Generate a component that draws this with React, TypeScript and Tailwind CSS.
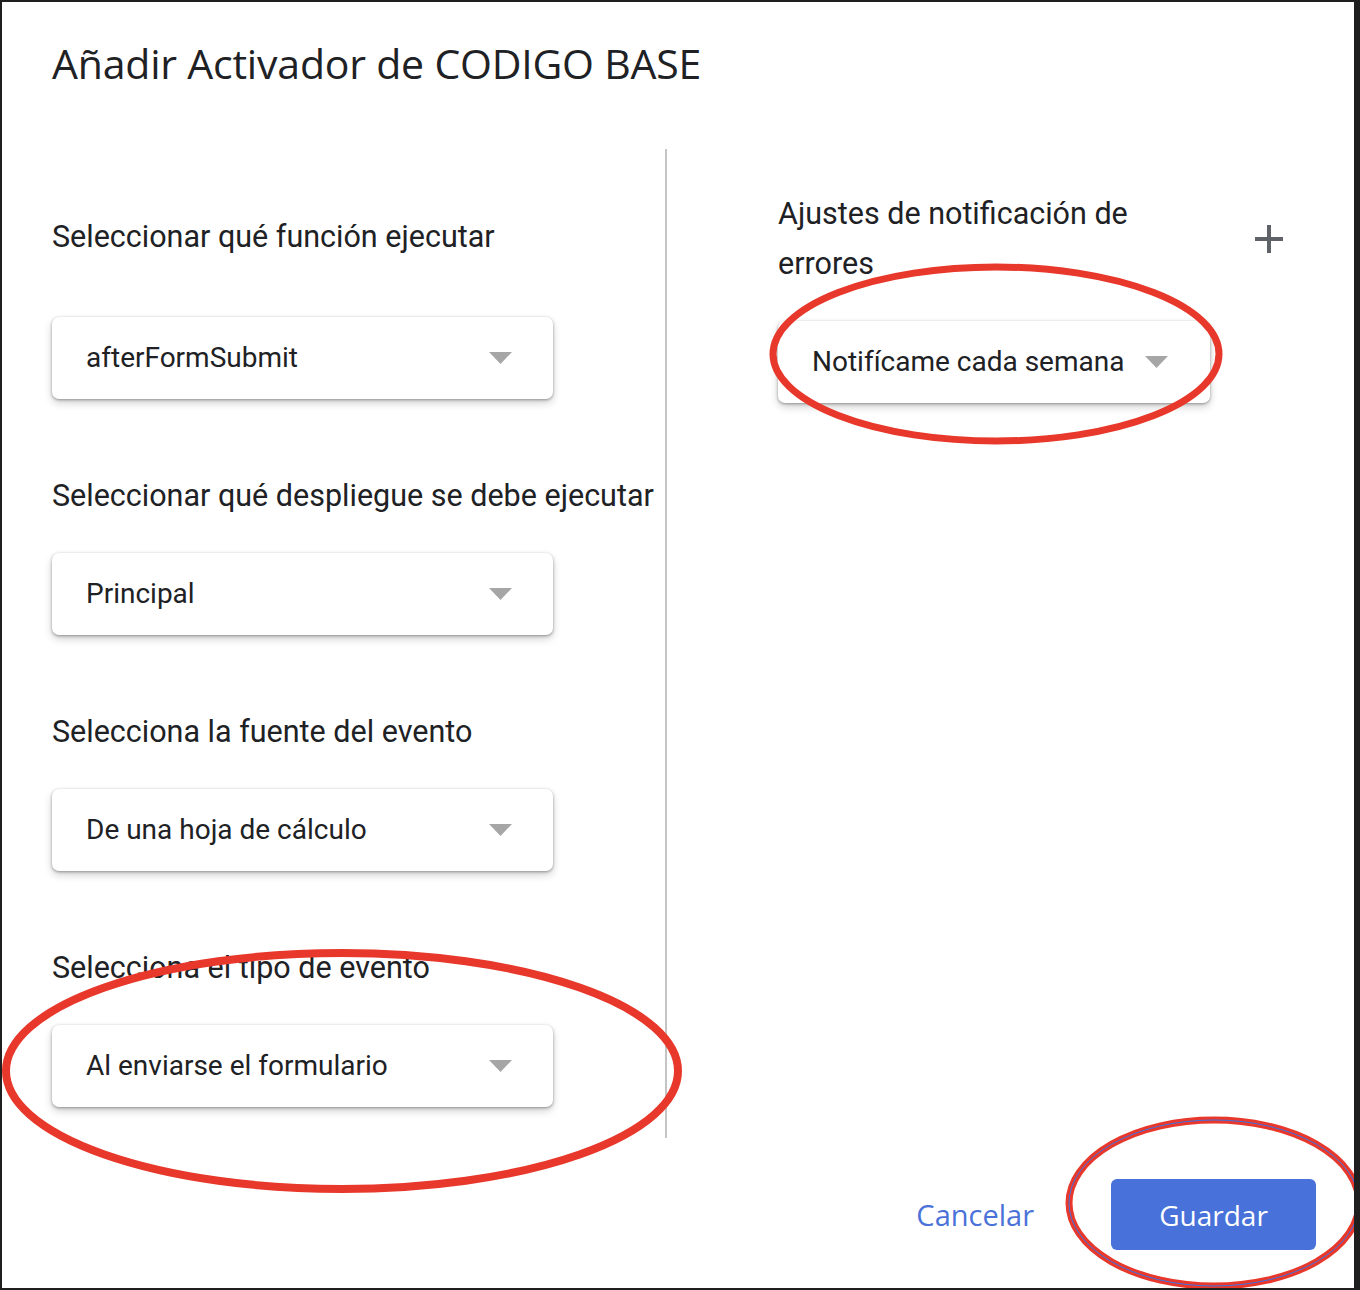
import React from 'react';

function Caret() {
    return (
        <svg width="23" height="12" viewBox="0 0 23 12" className="shrink-0">
            <polygon points="0,0 23,0 11.5,12" fill="#a6a6a6" />
        </svg>
    );
}

function Dropdown({ value, className = '' }: { value: string; className?: string }) {
    return (
        <div className={`flex items-center h-[82px] bg-white rounded-[7px] shadow-[0_1px_3px_rgba(0,0,0,0.35),0_4px_9px_rgba(0,0,0,0.18)] ${className}`}>
            <span className="text-[28px] text-[#202124] font-['Roboto',sans-serif] whitespace-nowrap">{value}</span>
            <Caret />
        </div>
    );
}

function Field({ label, value, top, gap }: { label: string; value: string; top: string; gap: string }) {
    return (
        <div className={top}>
            <div className="text-[30.5px] leading-[50px] text-[#202124] font-['Roboto',sans-serif] whitespace-nowrap">{label}</div>
            <div className={`${gap} w-[501px]`}>
                <Dropdown value={value} className="justify-between pl-[34px] pr-[41px]" />
            </div>
        </div>
    );
}

function Annotations() {
    return (
        <svg width="1360" height="1290" viewBox="0 0 1360 1290" className="absolute -left-[2px] -top-[2px] pointer-events-none">
            <ellipse cx="996" cy="354" rx="223" ry="87" fill="none" stroke="#e8382b" strokeWidth="7" />
            <ellipse cx="342" cy="1071" rx="336" ry="118" fill="none" stroke="#e8382b" strokeWidth="8" />
            <ellipse cx="1214" cy="1203" rx="145" ry="83" fill="none" stroke="#e8382b" strokeWidth="7" />
            <ellipse cx="1214" cy="1203" rx="145" ry="83" fill="none" stroke="#3b73e6" strokeWidth="1" />
        </svg>
    );
}

export default function App() {
    return (
        <div className="w-[1360px] h-[1290px] bg-[#1f1f1f] pt-[2px] pl-[2px] pr-[6px] pb-[2px]">
            <div className="relative w-full h-full bg-white overflow-hidden flex flex-col">
                <h1 className="pl-[50px] pt-[36px] text-[41px] leading-[50px] text-[#202124] font-['Open_Sans',sans-serif] tracking-[-0.2px] whitespace-nowrap">
                    Añadir Activador de CODIGO BASE
                </h1>

                <div className="flex mt-[61px] pl-[50px]">
                    <div className="w-[615px] h-[989px] border-r-2 border-[#c4c4c4]">
                        <Field top="pt-[63px]" gap="mt-[55px]" label="Seleccionar qué función ejecutar" value="afterFormSubmit" />
                        <Field top="pt-[72px]" gap="mt-[32px]" label="Seleccionar qué despliegue se debe ejecutar" value="Principal" />
                        <Field top="pt-[72px]" gap="mt-[32px]" label="Selecciona la fuente del evento" value="De una hoja de cálculo" />
                        <Field top="pt-[72px]" gap="mt-[32px]" label="Selecciona el tipo de evento" value="Al enviarse el formulario" />
                    </div>

                    <div className="flex-1 pl-[111px] pt-[40px]">
                        <div className="flex justify-between items-center pr-[71px]">
                            <div className="w-[420px] text-[30.5px] leading-[50px] text-[#202124] font-['Roboto',sans-serif]">
                                Ajustes de notificación de errores
                            </div>
                            <svg width="28" height="28" viewBox="0 0 28 28">
                                <rect x="12" y="0" width="4" height="28" fill="#5f6368" />
                                <rect x="0" y="12" width="28" height="4" fill="#5f6368" />
                            </svg>
                        </div>
                        <div className="mt-[32px] flex">
                            <Dropdown value="Notifícame cada semana" className="pl-[34px] pr-[42px] gap-[21px]" />
                        </div>
                    </div>
                </div>

                <div className="flex justify-end items-center gap-[77px] mt-[41px] pr-[38px]">
                    <button className="text-[29px] text-[#4a72d8] font-['Open_Sans',sans-serif]">Cancelar</button>
                    <button className="w-[205px] h-[71px] rounded-[6px] bg-[#4872d9] text-white text-[28px] font-['Open_Sans',sans-serif]">
                        Guardar
                    </button>
                </div>

                <Annotations />
            </div>
        </div>
    );
}
